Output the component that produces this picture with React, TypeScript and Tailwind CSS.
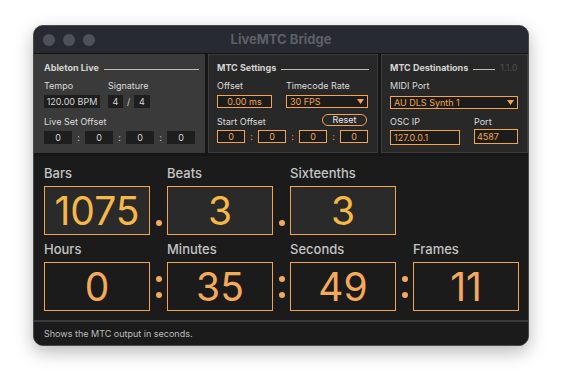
import React from "react";

const OR = "border-[#f2a54e]";

function SmallBox({ children, w, orange, className = "" }: { children: React.ReactNode; w: string; orange?: boolean; className?: string }) {
  return (
    <div
      className={`${w} h-[13px] flex items-center justify-center text-[9px] leading-none ${
        orange ? `border ${OR} text-[#f2a54e] bg-[#1c1c1c]` : "bg-[#1e1e1e] text-[#d6d6d6]"
      } ${className}`}
    >
      {children}
    </div>
  );
}

function Heading({ title, lineW, extra }: { title: string; lineW: string; extra?: React.ReactNode }) {
  return (
    <div className="h-[12px] flex items-center gap-[5px]">
      <span className="text-[9px] font-bold text-[#d4d4d4] leading-none">{title}</span>
      <div className={`${lineW} h-px bg-[#bdbdbd] mt-[4px]`} />
      {extra}
    </div>
  );
}

function Sep({ c }: { c: string }) {
  return <span className={`w-[13px] text-center text-[9px] leading-none ${c}`}>:</span>;
}

function Big({ value, top }: { value: string; top?: boolean }) {
  return (
    <div
      className={`w-[106px] h-[49px] border ${OR} flex items-center justify-center text-[39px] leading-none ${
        top ? "bg-[#2a2a2a] text-[#f6b846]" : "bg-[#1b1b1b] text-[#f4aa5a]"
      }`}
    >
      {value}
    </div>
  );
}

function Dot() {
  return (
    <div className="w-[17px] h-[49px] flex items-end justify-center pb-[9px]">
      <div className="w-[6px] h-[6px] rounded-full bg-[#f4a95c]" />
    </div>
  );
}

function Colon() {
  return (
    <div className="w-[17px] h-[48px] flex flex-col items-center justify-center gap-[10px] pt-[2px]">
      <div className="w-[6px] h-[6px] rounded-full bg-[#f4a95c]" />
      <div className="w-[6px] h-[6px] rounded-full bg-[#f4a95c]" />
    </div>
  );
}

function BigLabel({ children }: { children: React.ReactNode }) {
  return <div className="w-[106px] h-[16px] text-[13px] leading-none text-[#c4c4c4] font-medium">{children}</div>;
}

export default function App() {
  return (
    <div
      className="w-[563px] h-[388px] bg-white pl-[33px] pt-[25px]"
      style={{ fontFamily: "Inter, 'Noto Sans', sans-serif" }}
    >
      <div className="w-[496px] h-[321px] rounded-[10px] border border-[#4a4a4a] overflow-hidden bg-[#1b1b1b] flex flex-col shadow-[0_6px_18px_rgba(0,0,0,0.28)]">
        {/* title bar */}
        <div className="h-[28px] shrink-0 bg-[#282a31] grid grid-cols-[1fr_auto_1fr] items-center border-b border-[#121212]">
          <div className="flex gap-[8px] pl-[9px]">
            <div className="w-[12px] h-[12px] rounded-full bg-[#4f5158]" />
            <div className="w-[12px] h-[12px] rounded-full bg-[#4f5158]" />
            <div className="w-[12px] h-[12px] rounded-full bg-[#4f5158]" />
          </div>
          <div className="text-[13px] font-bold text-[#5c5f68]">LiveMTC Bridge</div>
          <div />
        </div>

        {/* top panels */}
        <div className="h-[102px] shrink-0 flex gap-[3px] bg-[#161616] pb-[3px]">
          {/* Ableton Live */}
          <div className="w-[171px] bg-[#3a3a3a] pl-[10px] pt-[7px] flex flex-col">
            <Heading title="Ableton Live" lineW="w-[95px]" />
            <div className="flex mt-[6px] h-[12px] items-center text-[9px] text-[#dcdcdc] leading-none">
              <span className="w-[64px]">Tempo</span>
              <span>Signature</span>
            </div>
            <div className="flex mt-[4px] items-center">
              <SmallBox w="w-[56px]">120.00 BPM</SmallBox>
              <div className="w-[8px]" />
              <SmallBox w="w-[15px]">4</SmallBox>
              <span className="w-[11px] text-center text-[9px] text-[#d0d0d0] leading-none">/</span>
              <SmallBox w="w-[16px]">4</SmallBox>
            </div>
            <div className="mt-[7px] h-[12px] flex items-center text-[9px] text-[#dcdcdc] leading-none">Live Set Offset</div>
            <div className="flex mt-[4px] items-center">
              <SmallBox w="w-[28px]">0</SmallBox>
              <Sep c="text-[#cfcfcf]" />
              <SmallBox w="w-[28px]">0</SmallBox>
              <Sep c="text-[#cfcfcf]" />
              <SmallBox w="w-[28px]">0</SmallBox>
              <Sep c="text-[#cfcfcf]" />
              <SmallBox w="w-[28px]">0</SmallBox>
            </div>
          </div>

          {/* MTC Settings */}
          <div className="w-[170px] bg-[#282828] border border-[#3c3c3c] pl-[8px] pt-[6px] flex flex-col">
            <Heading title="MTC Settings" lineW="w-[88px]" />
            <div className="flex mt-[6px] h-[12px] items-center text-[9px] text-[#dcdcdc] leading-none">
              <span className="w-[69px]">Offset</span>
              <span>Timecode Rate</span>
            </div>
            <div className="flex mt-[4px] items-center">
              <SmallBox w="w-[55px]" orange>0.00 ms</SmallBox>
              <div className="w-[14px]" />
              <div className={`w-[82px] h-[13px] border ${OR} flex items-center justify-between px-[3px] text-[9px] leading-none text-[#f2a54e] bg-[#1c1c1c]`}>
                <span>30 FPS</span>
                <svg width="7" height="5" viewBox="0 0 7 5"><path d="M0 0H7L3.5 5Z" fill="#f2a54e" /></svg>
              </div>
            </div>
            <div className="mt-[4px] h-[15px] flex items-center justify-between pr-[10px] text-[9px] text-[#dcdcdc] leading-none">
              <span className="mt-[3px]">Start Offset</span>
              <div className={`w-[45px] h-[12px] rounded-full border ${OR} flex items-center justify-center text-[9px] text-[#e8e8e8]`}>Reset</div>
            </div>
            <div className="flex mt-[3px] items-center">
              <SmallBox w="w-[28px]" orange>0</SmallBox>
              <Sep c="text-[#f2a54e]" />
              <SmallBox w="w-[28px]" orange>0</SmallBox>
              <Sep c="text-[#f2a54e]" />
              <SmallBox w="w-[28px]" orange>0</SmallBox>
              <Sep c="text-[#f2a54e]" />
              <SmallBox w="w-[28px]" orange>0</SmallBox>
            </div>
          </div>

          {/* MTC Destinations */}
          <div className="flex-1 bg-[#282828] border border-[#3c3c3c] pl-[8px] pt-[6px] flex flex-col">
            <Heading
              title="MTC Destinations"
              lineW="w-[22px]"
              extra={<span className="text-[9px] text-[#4e4e4e] leading-none ml-[0px]">1.1.0</span>}
            />
            <div className="mt-[6px] h-[12px] flex items-center text-[9px] text-[#dcdcdc] leading-none">MIDI Port</div>
            <div className={`mt-[5px] w-[128px] h-[13px] border ${OR} flex items-center justify-between px-[3px] text-[9px] leading-none text-[#f2a54e] bg-[#1c1c1c]`}>
              <span>AU DLS Synth 1</span>
              <svg width="7" height="5" viewBox="0 0 7 5"><path d="M0 0H7L3.5 5Z" fill="#f2a54e" /></svg>
            </div>
            <div className="flex mt-[6px] h-[12px] items-center text-[9px] text-[#dcdcdc] leading-none">
              <span className="w-[84px]">OSC IP</span>
              <span>Port</span>
            </div>
            <div className="flex mt-[2px] items-start">
              <div className={`w-[70px] h-[15px] border ${OR} flex items-center px-[3px] text-[9px] leading-none text-[#f2a54e] bg-[#1c1c1c] mt-[1px]`}>127.0.0.1</div>
              <div className="w-[14px]" />
              <div className={`w-[44px] h-[15px] border ${OR} flex items-center px-[2px] text-[9px] leading-none text-[#f2a54e] bg-[#1c1c1c]`}>4587</div>
            </div>
          </div>
        </div>

        {/* big displays */}
        <div className="flex-1 pl-[10px] pt-[11px] flex flex-col">
          <div className="flex">
            <BigLabel>Bars</BigLabel>
            <div className="w-[17px]" />
            <BigLabel>Beats</BigLabel>
            <div className="w-[17px]" />
            <BigLabel>Sixteenths</BigLabel>
          </div>
          <div className="flex mt-[3px]">
            <Big value="1075" top />
            <Dot />
            <Big value="3" top />
            <Dot />
            <Big value="3" top />
          </div>
          <div className="flex mt-[8px]">
            <BigLabel>Hours</BigLabel>
            <div className="w-[17px]" />
            <BigLabel>Minutes</BigLabel>
            <div className="w-[17px]" />
            <BigLabel>Seconds</BigLabel>
            <div className="w-[17px]" />
            <BigLabel>Frames</BigLabel>
          </div>
          <div className="flex mt-[3px]">
            <Big value="0" />
            <Colon />
            <Big value="35" />
            <Colon />
            <Big value="49" />
            <Colon />
            <Big value="11" />
          </div>
        </div>

        {/* status */}
        <div className="h-[25px] shrink-0 border-t-2 border-[#3a3a3a] bg-[#1b1b1b] pl-[10px] flex items-center text-[9px] text-[#bdbdbd] leading-none">
          Shows the MTC output in seconds.
        </div>
      </div>
    </div>
  );
}
